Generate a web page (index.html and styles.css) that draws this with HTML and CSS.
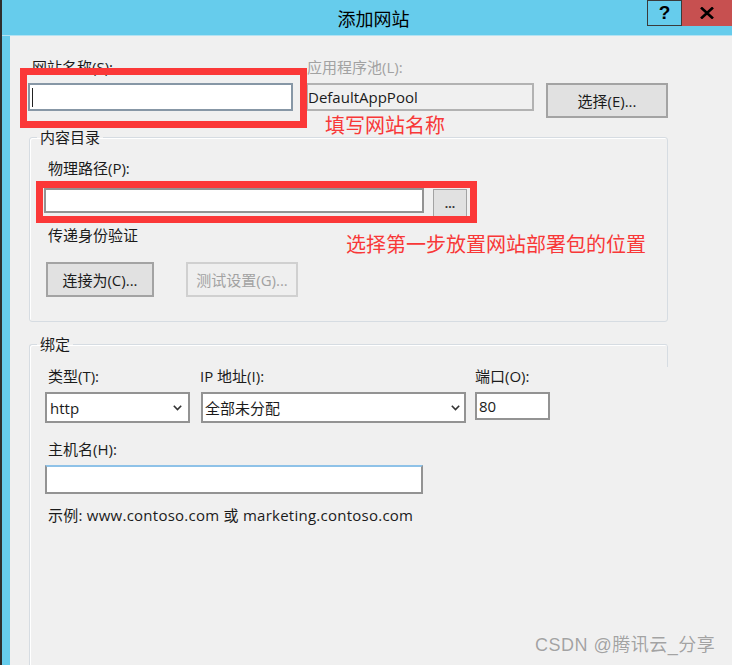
FILE: index.html
```html
<!DOCTYPE html>
<html lang="zh-CN">
<head>
<meta charset="utf-8">
<title>添加网站</title>
<link rel="stylesheet" href="styles.css">
</head>
<body>
<div class="window">
  <div class="titlebar">
    <div class="title">添加网站</div>
    <div class="controls">
      <div class="btn-help">?</div>
      <div class="btn-close">
        <svg width="14" height="12" viewBox="0 0 14 12"><path d="M1 0.5 L13 11.5 M13 0.5 L1 11.5" stroke="#000" stroke-width="2.6" fill="none"/></svg>
      </div>
    </div>
  </div>
  <div class="client">
    <div class="top-row">
      <div class="field name-field">
        <div class="lbl">网站名称(S):</div>
        <div class="input name-input"><span class="caret"></span></div>
      </div>
      <div class="field pool-field">
        <div class="lbl disabled">应用程序池(L):</div>
        <div class="input readonly">DefaultAppPool</div>
      </div>
      <button class="btn select-btn">选择(E)...</button>
    </div>

    <fieldset class="group content-group">
      <legend>内容目录</legend>
      <div class="lbl">物理路径(P):</div>
      <div class="path-row">
        <div class="input path-input"></div>
        <button class="btn browse-btn">...</button>
      </div>
      <div class="lbl pass-lbl">传递身份验证</div>
      <div class="btn-row">
        <button class="btn connect-btn">连接为(C)...</button>
        <button class="btn test-btn">测试设置(G)...</button>
      </div>
    </fieldset>

    <fieldset class="group binding-group">
      <legend>绑定</legend>
      <div class="binding-grid">
        <div class="lbl type-lbl">类型(T):</div>
        <div class="lbl ip-lbl">IP 地址(I):</div>
        <div class="lbl port-lbl">端口(O):</div>
        <div class="input select type-select"><span>http</span><svg width="9" height="6" viewBox="0 0 9 6"><path d="M0.8 0.8 L4.5 4.6 L8.2 0.8" stroke="#333" stroke-width="1.6" fill="none"/></svg></div>
        <div class="input select ip-select"><span>全部未分配</span><svg width="9" height="6" viewBox="0 0 9 6"><path d="M0.8 0.8 L4.5 4.6 L8.2 0.8" stroke="#333" stroke-width="1.6" fill="none"/></svg></div>
        <div class="input port-input">80</div>
      </div>
      <div class="lbl host-lbl">主机名(H):</div>
      <div class="input host-input"></div>
      <div class="lbl example">示例: www.contoso.com 或 marketing.contoso.com</div>
    </fieldset>
  </div>
</div>

<div class="redbox box-name"></div>
<div class="redbox box-path"></div>
<div class="note note-name">填写网站名称</div>
<div class="note note-path">选择第一步放置网站部署包的位置</div>
<div class="watermark">CSDN @腾讯云_分享</div>
</body>
</html>
```

FILE: styles.css
```css
html, body {
  margin: 0;
  width: 732px;
  height: 665px;
  overflow: hidden;
}
body {
  position: relative;
  background: #f0f0f0;
  font-family: "Open Sans", "Noto Sans CJK SC", sans-serif;
  font-size: 15px;
  line-height: 20px;
  color: #1b1b1b;
}

.window {
  box-sizing: border-box;
  height: 665px;
  border-left: 2px solid #2e2e2e;
  background: #66ccec;
  display: flex;
  flex-direction: column;
  overflow: hidden;
}

.titlebar {
  flex-shrink: 0;
  height: 35px;
  border-bottom: 1px solid #b4e2f2;
  display: grid;
  grid-template-columns: 1fr auto 1fr;
  align-items: center;
  padding-left: 13px;
}
.title {
  grid-column: 2;
  font-family: "Noto Sans CJK SC", sans-serif;
  font-size: 18px;
  line-height: 22px;
  color: #000;
}
.controls {
  grid-column: 3;
  justify-self: end;
  align-self: start;
  display: flex;
  height: 26px;
}
.btn-help {
  box-sizing: border-box;
  width: 35px;
  height: 26px;
  border: 1px solid #3a3a3a;
  background: #66ccec;
  display: flex;
  align-items: center;
  justify-content: center;
  font-family: "Liberation Sans", sans-serif;
  font-weight: bold;
  font-size: 19px;
  color: #000;
}
.btn-close {
  width: 50px;
  height: 26px;
  background: #c75050;
  display: flex;
  align-items: center;
  justify-content: center;
}

.client {
  flex: 1 0 auto;
  margin-left: 8px;
  background: #f0f0f0;
}

.lbl {
  font-size: 15px;
  line-height: 20px;
  white-space: nowrap;
}
.disabled {
  color: #a2a2a2;
}

.input {
  box-sizing: border-box;
  background: #fff;
  border: 2px solid #939393;
}

.btn {
  box-sizing: border-box;
  margin: 0;
  padding: 0;
  font: inherit;
  font-size: 15px;
  line-height: 20px;
  color: #1b1b1b;
  background: #e1e1e1;
  border: 2px solid #a3a3a3;
  white-space: nowrap;
}

/* top row */
.top-row {
  display: flex;
  align-items: flex-start;
  padding: 21px 0 0 18px;
}
.field {
  display: flex;
  flex-direction: column;
  gap: 6px;
}
.name-field {
  width: 265px;
}
.name-field .lbl {
  padding-left: 4px;
}
.name-input {
  height: 28px;
  border-color: #8797a6;
  display: flex;
  align-items: center;
  padding-left: 2px;
}
.caret {
  width: 1px;
  height: 19px;
  background: #222;
}
.pool-field {
  width: 228px;
  margin-left: 13px;
}
.pool-field .lbl {
  padding-left: 1px;
}
.readonly {
  height: 28px;
  background: #f0f0f0;
  border-color: #b2b2b2;
  padding-left: 0;
  line-height: 24px;
}
.select-btn {
  width: 122px;
  height: 35px;
  margin: 26px 0 0 12px;
}

/* group boxes */
.group {
  box-sizing: border-box;
  width: 639px;
  margin: 0 0 0 19px;
  padding: 0 0 0 14px;
  border: 1px solid #d6dce2;
  border-radius: 3px;
  box-shadow: inset 1px 1px 0 #ffffff;
}
.group legend {
  margin-left: -7px;
  padding: 0 3px;
  font-size: 15px;
  line-height: 20px;
}

.content-group {
  margin-top: 9px;
  padding-top: 11px;
  padding-bottom: 24px;
}
.content-group > .lbl {
  padding-left: 4px;
}
.path-row {
  display: flex;
  align-items: flex-start;
  margin-top: 10px;
}
.path-input {
  width: 380px;
  height: 25px;
}
.browse-btn {
  width: 34px;
  height: 29px;
  margin: 1px 0 0 9px;
  border-width: 1px;
  font-size: 12px;
  font-weight: bold;
  line-height: 12px;
  color: #333;
}
.pass-lbl {
  margin-top: 7px;
}
.btn-row {
  display: flex;
  margin-top: 17px;
}
.connect-btn {
  width: 108px;
  height: 35px;
  margin-left: 2px;
}
.test-btn {
  width: 112px;
  height: 35px;
  margin-left: 32px;
  background: #efefef;
  border-color: #d0d0d0;
  color: #a2a2a2;
}

.binding-group {
  margin-top: 12px;
  padding-top: 12px;
  height: 400px;
  border-right-color: transparent;
  border-bottom-color: transparent;
  background: linear-gradient(#d6dce2, #d6dce2) right top / 1px 23px no-repeat;
  background-origin: border-box;
}
.binding-grid {
  display: grid;
  grid-template-columns: 145px 265px 73px;
  column-gap: 11px;
  row-gap: 6px;
  margin-left: 1px;
  align-items: start;
}
.binding-grid .port-lbl,
.binding-grid .port-input {
  margin-left: -2px;
}
.type-lbl {
  padding-left: 3px;
}
.ip-lbl {
  margin-left: -1px;
}
.select {
  height: 31px;
  display: flex;
  align-items: center;
  justify-content: space-between;
  padding: 0 6px 0 3px;
}
.ip-select {
  padding-left: 2px;
  padding-right: 4px;
}
.port-input {
  height: 28px;
  padding-left: 2px;
  line-height: 24px;
}
.host-lbl {
  margin-top: 16px;
  padding-left: 4px;
}
.host-input {
  width: 378px;
  height: 29px;
  margin: 6px 0 0 1px;
  border-top-color: #8ec2e8;
}
.example {
  margin-top: 11px;
  padding-left: 4px;
  letter-spacing: 0.25px;
}

/* annotations (overlay) */
.redbox {
  position: absolute;
  box-sizing: border-box;
  border: 7px solid #fb3838;
}
.box-name {
  left: 20px;
  top: 68px;
  width: 287px;
  height: 60px;
}
.box-path {
  left: 36px;
  top: 181px;
  width: 441px;
  height: 42px;
}
.note {
  position: absolute;
  font-family: "Noto Sans CJK SC", sans-serif;
  font-size: 20px;
  line-height: 20px;
  color: #f83838;
  white-space: nowrap;
}
.note-name {
  left: 325px;
  top: 115px;
}
.note-path {
  left: 346px;
  top: 234px;
}
.watermark {
  position: absolute;
  left: 535px;
  top: 634px;
  font-family: "Liberation Sans", "Noto Sans CJK SC", sans-serif;
  font-size: 18px;
  line-height: 22px;
  letter-spacing: 0.5px;
  color: #a3a3a3;
  text-shadow: 0 0 1px #ffffff;
  white-space: nowrap;
}
```
